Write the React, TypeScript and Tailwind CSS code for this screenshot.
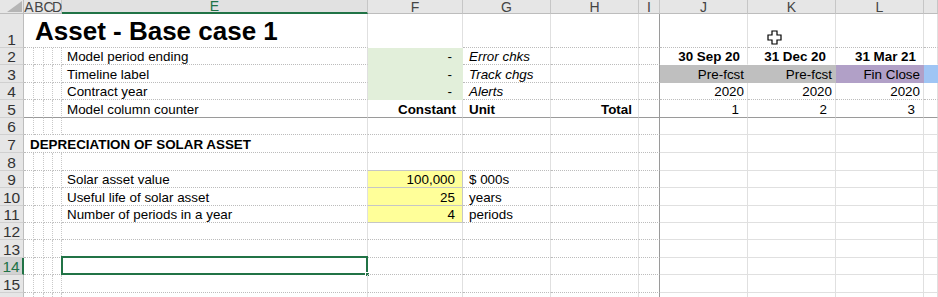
import React from "react";

const COLS = ["A", "B", "C", "D", "E", "F", "G", "H", "I", "J", "K", "L", ""];
const ROWS = 16;

type Content = { t: string; cls: string };

const LBL = "justify-start pl-[5px]";
const UNIT = "justify-start pl-[6px]";
const content: Record<string, Content> = {
  "2,5": { t: "Model period ending", cls: LBL },
  "3,5": { t: "Timeline label", cls: LBL },
  "4,5": { t: "Contract year", cls: LBL },
  "5,5": { t: "Model column counter", cls: LBL },
  "2,6": { t: "-", cls: "justify-end pr-[10px]" },
  "3,6": { t: "-", cls: "justify-end pr-[10px]" },
  "4,6": { t: "-", cls: "justify-end pr-[10px]" },
  "5,6": { t: "Constant", cls: "justify-end pr-[6px] font-bold" },
  "2,7": { t: "Error chks", cls: "justify-start pl-[6px] italic" },
  "3,7": { t: "Track chgs", cls: "justify-start pl-[6px] italic" },
  "4,7": { t: "Alerts", cls: "justify-start pl-[6px] italic" },
  "5,7": { t: "Unit", cls: "justify-start pl-[6px] font-bold" },
  "5,8": { t: "Total", cls: "justify-end pr-[6px] font-bold" },
  "2,10": { t: "30 Sep 20", cls: "justify-end pr-[7px] font-bold" },
  "2,11": { t: "31 Dec 20", cls: "justify-end pr-[9px] font-bold" },
  "2,12": { t: "31 Mar 21", cls: "justify-end pr-[7px] font-bold" },
  "3,10": { t: "Pre-fcst", cls: "justify-end pr-[3px]" },
  "3,11": { t: "Pre-fcst", cls: "justify-end pr-[3px]" },
  "3,12": { t: "Fin Close", cls: "justify-end pr-[3px]" },
  "4,10": { t: "2020", cls: "justify-end pr-[3px]" },
  "4,11": { t: "2020", cls: "justify-end pr-[3px]" },
  "4,12": { t: "2020", cls: "justify-end pr-[3px]" },
  "5,10": { t: "1", cls: "justify-end pr-[8px]" },
  "5,11": { t: "2", cls: "justify-end pr-[8px]" },
  "5,12": { t: "3", cls: "justify-end pr-[8px]" },
  "9,5": { t: "Solar asset value", cls: LBL },
  "10,5": { t: "Useful life of solar asset", cls: LBL },
  "11,5": { t: "Number of periods in a year", cls: LBL },
  "9,6": { t: "100,000", cls: "justify-end pr-[7px]" },
  "10,6": { t: "25", cls: "justify-end pr-[7px]" },
  "11,6": { t: "4", cls: "justify-end pr-[7px]" },
  "9,7": { t: "$ 000s", cls: UNIT },
  "10,7": { t: "years", cls: UNIT },
  "11,7": { t: "periods", cls: UNIT },
};

const special: Record<string, string> = {
  "1,6": "border-r border-b border-dotted [border-right-style:solid]! border-r-[#e0e0e0] border-b-transparent",
  "2,6": "bg-[#e2efda] border-r border-b border-solid border-transparent",
  "3,6": "bg-[#e2efda] border-r border-b border-solid border-transparent",
  "4,6": "bg-[#e2efda] border-r border-b border-solid border-transparent",
  "2,10": "border-r border-b border-dotted [border-right-style:solid]! border-r-[#e0e0e0] border-b-transparent",
  "2,11": "border-r border-b border-dotted [border-right-style:solid]! border-r-[#e0e0e0] border-b-transparent",
  "2,12": "border-r border-b border-dotted [border-right-style:solid]! border-r-[#e0e0e0] border-b-transparent",
  "2,13": "border-r border-b border-dotted [border-right-style:solid]! border-r-[#e0e0e0] border-b-transparent",
  "3,10": "bg-[#bfbfbf] border-r border-b border-solid border-transparent",
  "3,11": "bg-[#bfbfbf] border-r border-b border-solid border-transparent",
  "3,12": "bg-[#b1a0c7] border-r border-b border-solid border-transparent",
  "3,13": "bg-[#9fc5f4] border-r border-b border-solid border-transparent",
  "8,6": "border-r border-b border-solid border-r-[#e0e0e0] border-b-[#c6c6c6]",
  "9,6": "bg-[#ffff99] border-r border-b border-solid border-[#c6c6c6]",
  "10,6": "bg-[#ffff99] border-r border-b border-solid border-[#c6c6c6]",
  "11,6": "bg-[#ffff99] border-r border-b border-solid border-[#c6c6c6]",
};

function borderClasses(r: number, c: number): string {
  const key = `${r},${c}`;
  if (special[key]) return special[key];
  const hDotted = c <= 9 || r <= 5;
  const vDotted = c <= 4;
  let style: string;
  if (hDotted && vDotted) style = "border-dotted";
  else if (hDotted) style = "border-dotted [border-right-style:solid]!";
  else style = "border-solid";
  let b: string;
  if (r === 5) b = "border-b-[#9a9a9a] [border-bottom-style:solid]!";
  else if (hDotted) b = "border-b-[#bcbcbc]";
  else b = "border-b-[#e0e0e0]";
  let rr: string;
  if (c === 9) rr = "border-r-[#9a9a9a] [border-right-style:solid]!";
  else if (vDotted) rr = "border-r-[#c9c9c9]";
  else rr = "border-r-[#e0e0e0]";
  return `border-r border-b ${style} ${b} ${rr}`;
}

function headerClass(c: number): string {
  if (c <= 3)
    return "bg-[#e6e6e6] border-b border-solid border-b-[#bdbdbd] text-[#444]";
  if (c === 5)
    return "bg-[#e1e1e1] border-r border-b-2 border-solid border-r-[#c6c6c6] border-b-[#217346] text-[#217346]";
  return "bg-[#e6e6e6] border-r border-b border-solid border-r-[#c6c6c6] border-b-[#bdbdbd] text-[#444]";
}

export default function App() {
  const cells: React.ReactNode[] = [];

  cells.push(
    <div
      key="corner"
      className="relative bg-[#e6e6e6] border-r border-b border-solid border-r-[#bdbdbd] border-b-[#bdbdbd]"
    >
      <svg className="absolute right-[1px] bottom-[1px]" width="15" height="11" viewBox="0 0 15 11">
        <polygon points="15,0 15,11 0,11" fill="#b5b5b5" />
      </svg>
    </div>
  );

  COLS.forEach((l, i) => {
    cells.push(
      <div
        key={`h-${i}`}
        className={`flex items-end justify-center overflow-visible whitespace-nowrap text-[14px] leading-[12px] ${headerClass(i + 1)}`}
      >
        {l}
      </div>
    );
  });

  for (let r = 1; r <= ROWS; r++) {
    const sel = r === 14;
    cells.push(
      <div
        key={`r-${r}`}
        className={
          sel
            ? "flex items-end justify-center text-[15.5px] leading-[15px] bg-[#d2d2d2] text-[#217346] border-r-2 border-b border-solid border-r-[#217346] border-b-[#c8c8c8]"
            : "flex items-end justify-center text-[15.5px] leading-[15px] bg-[#e6e6e6] text-[#333] border-r border-b border-solid border-r-[#bdbdbd] border-b-[#d0d0d0]"
        }
      >
        {r}
      </div>
    );

    if (r === 1) {
      cells.push(
        <div
          key="title"
          className="col-span-5 flex items-end whitespace-nowrap pl-[11px] pb-[3px] text-[26px] leading-[26px] font-bold border-r border-b border-dotted [border-right-style:solid]! border-r-[#e0e0e0] border-b-[#bcbcbc]"
        >
          Asset - Base case 1
        </div>
      );
    } else if (r === 7) {
      cells.push(
        <div
          key="sec"
          className="col-span-5 flex items-end whitespace-nowrap pl-[6px] pb-[1px] text-[13.4px] leading-[13px] font-bold border-r border-b border-dotted [border-right-style:solid]! border-r-[#e0e0e0] border-b-[#bcbcbc]"
        >
          DEPRECIATION OF SOLAR ASSET
        </div>
      );
    }

    for (let c = 1; c <= 13; c++) {
      if ((r === 1 || r === 7) && c <= 5) continue;
      const key = `${r},${c}`;
      const ct = content[key];
      const isSel = r === 14 && c === 5;
      cells.push(
        <div
          key={key}
          className={`relative flex items-end whitespace-nowrap pb-[1px] text-[13.4px] leading-[13px] ${borderClasses(r, c)} ${ct ? ct.cls : ""}`}
        >
          {ct ? ct.t : null}
          {isSel && (
            <>
              <div className="absolute left-[-1px] top-[-2px] right-[-1px] bottom-[-1px] border-2 border-solid border-[#217346]" />
              <div className="absolute right-[-3px] bottom-[-3px] w-[5px] h-[5px] bg-[#217346] border border-solid border-white" />
            </>
          )}
        </div>
      );
    }
  }

  return (
    <div className="relative w-[938px] h-[297px] overflow-hidden bg-white text-black font-['Liberation_Sans',Arial,sans-serif]">
      <div className="grid grid-cols-[24px_10px_10px_9px_9px_306px_95px_88px_88px_21px_88px_88px_88px_1fr] grid-rows-[14px_34px_17px_18px_17px_18px_17px_18px_18px_17px_18px_17px_17px_18px_17px_18px_18px]">
        {cells}
      </div>
      <svg
        className="absolute left-[766px] top-[29px]"
        width="17"
        height="17"
        viewBox="0 0 17 17"
      >
        <polygon
          points="6,2 11,2 11,6 15,6 15,11 11,11 11,15 6,15 6,11 2,11 2,6 6,6"
          fill="#fff"
          stroke="#000"
          strokeWidth="1.2"
          strokeLinejoin="miter"
        />
      </svg>
    </div>
  );
}
